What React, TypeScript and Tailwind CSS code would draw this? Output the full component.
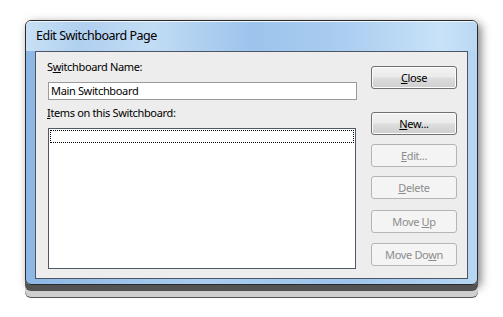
import type { ReactNode } from "react";

const font = { fontFamily: '"Noto Sans", "Open Sans", sans-serif' };

function Btn({ children, disabled, className = "" }: { children: ReactNode; disabled?: boolean; className?: string }) {
  return (
    <button
      type="button"
      disabled={disabled}
      className={
        "h-[23px] w-[86px] rounded-[3px] border text-[11px] leading-none tracking-[-0.35px] " +
        (disabled
          ? "border-[#b5b5b5] bg-[#f4f4f4] text-[#8d8d8d] "
          : "border-[#707070] bg-[linear-gradient(180deg,#f2f2f2_0%,#ebebeb_48%,#dddddd_52%,#cfcfcf_100%)] text-black shadow-[inset_0_0_0_1px_#fcfcfc] ") +
        className
      }
    >
      {children}
    </button>
  );
}

export default function App() {
  return (
    <div className="h-[317px] w-[503px] bg-white pl-[25px] pt-[20px]" style={font}>
      <div className="flex h-[265px] w-[453px] flex-col rounded-[6px] border border-[#2a2a2a] bg-[linear-gradient(90deg,#8db8e4_0%,#a9cdf0_40%,#9cc4ec_70%,#b7d6f3_100%)] shadow-[0_6px_0_0_#525252,0_12px_0_0_#cfcfcf,0_13px_0_0_#555555,3px_3px_10px_rgba(0,0,0,0.5)]">
        <div className="flex h-[30px] items-center rounded-t-[5px] border-t border-[#eef5fc] bg-[linear-gradient(90deg,#c8e0f5_0%,#b0d0f0_12%,#c2dcf4_28%,#9cc4ec_50%,#aacdf0_70%,#c8e2f9_92%,#bad8f3_100%)] pl-[10px]">
          <span className="text-[12.5px] tracking-[-0.5px] text-black">Edit Switchboard Page</span>
        </div>
        <div className="mx-[9px] mb-[5px] flex flex-1 border border-[#4c5563] bg-[#ededed] text-[11px] tracking-[-0.35px]">
          <div className="flex w-[320px] flex-col pl-[12px] pt-[7px]">
            <div className="h-[15px] leading-[15px] -ml-px">
              S<u>w</u>itchboard Name:
            </div>
            <div className="mt-[8px] flex h-[18px] w-[309px] items-center border border-[#9a9a9a] bg-white pl-[2px]">
              Main Switchboard
            </div>
            <div className="mt-[5px] h-[15px] leading-[15px] -ml-px">
              <u>I</u>tems on this Switchboard:
            </div>
            <div className="mt-[8px] h-[141px] w-[308px] border border-[#4f5866] bg-white p-px">
              <div className="h-[13px] border border-dotted border-black" />
            </div>
          </div>
          <div className="ml-[15px] flex flex-col pt-[14px]">
            <Btn>
              <u>C</u>lose
            </Btn>
            <Btn className="mt-[23px]">
              <u>N</u>ew...
            </Btn>
            <Btn disabled className="mt-[9px]">
              <u>E</u>dit...
            </Btn>
            <Btn disabled className="mt-[9px]">
              <u>D</u>elete
            </Btn>
            <Btn disabled className="mt-[11px]">
              Move <u>U</u>p
            </Btn>
            <Btn disabled className="mt-[10px]">
              Move Do<u>w</u>n
            </Btn>
          </div>
        </div>
      </div>
    </div>
  );
}
